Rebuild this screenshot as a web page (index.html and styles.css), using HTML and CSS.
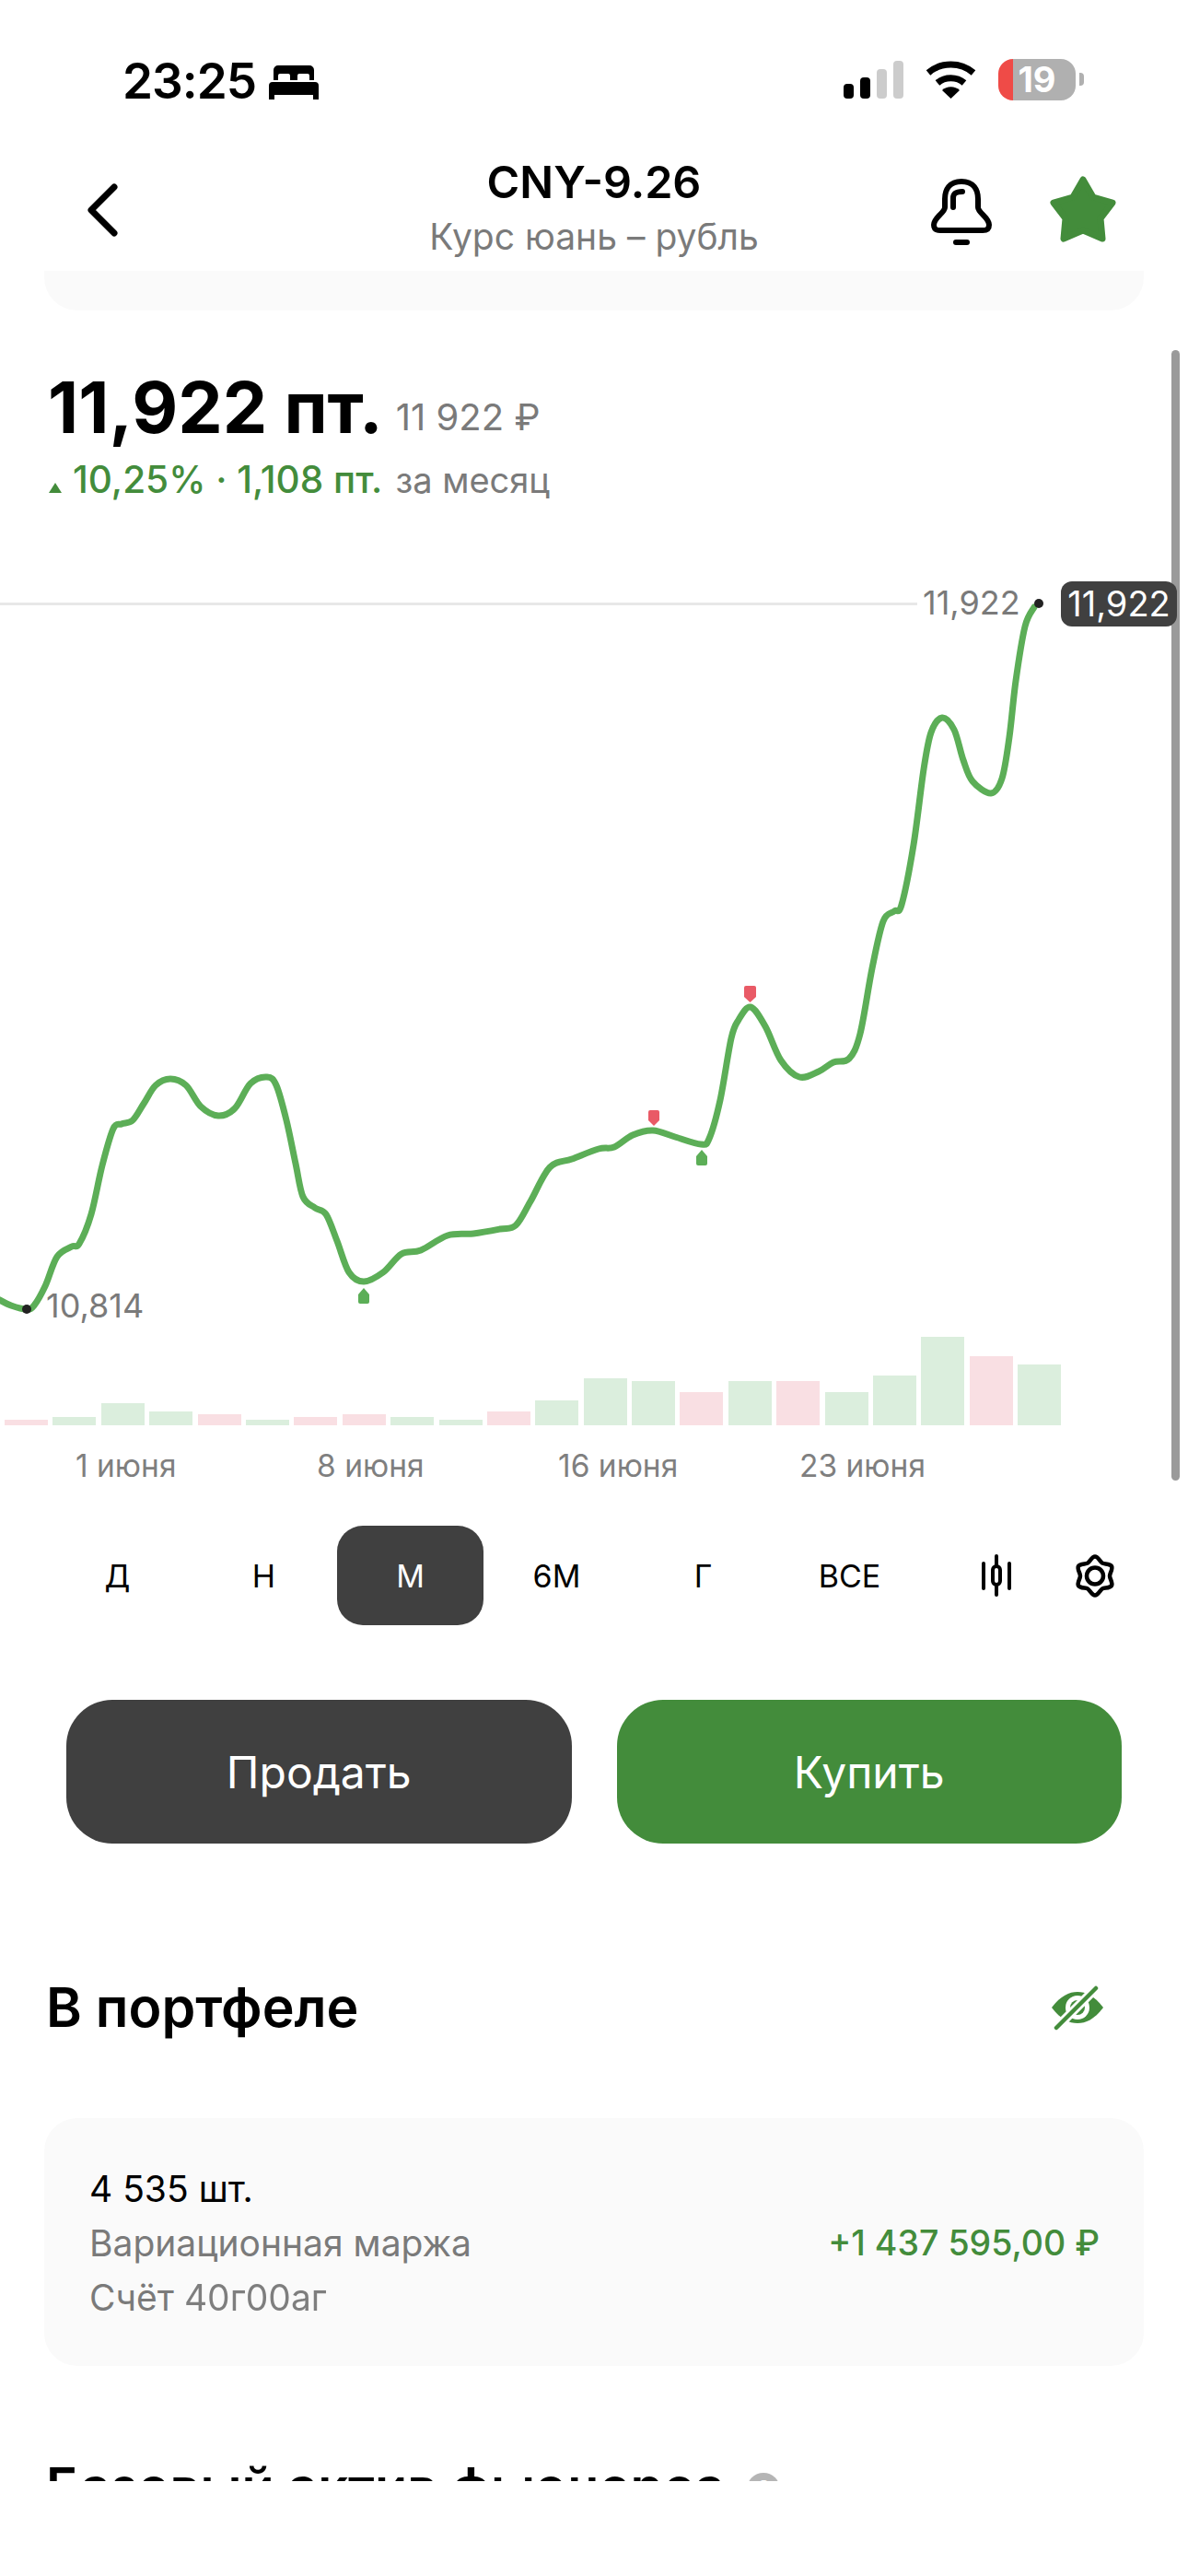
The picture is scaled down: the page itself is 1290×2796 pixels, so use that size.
FILE: index.html
```html
<!DOCTYPE html>
<html lang="ru">
<head>
  <meta charset="UTF-8" />
  <title>CNY-9.26</title>
  <link rel="stylesheet" href="styles.css">
</head>
<body>
  <div class="statusBar">
    <div class="statusLeft">
      <span class="time">23:25</span>
      <svg class="bedIcon" width="54" height="37" viewBox="0 0 54 37">
        <path d="M5 5a5 5 0 0 1 5-5h34a5 5 0 0 1 5 5v11H44v-5a2 2 0 0 0-2-2H33a2 2 0 0 0-2 2v5h-8v-5a2 2 0 0 0-2-2H12a2 2 0 0 0-2 2v5H5z"/>
        <path d="M0 22a4 4 0 0 1 4-4h46a4 4 0 0 1 4 4v15h-6v-5H6v5H0z"/>
      </svg>
    </div>
    <div class="statusRight">
      <div class="signal">
        <i class="bar1"></i><i class="bar2"></i><i class="bar3 off"></i><i class="bar4 off"></i>
      </div>
      <svg class="wifi" width="57" height="42" viewBox="0 0 57 42">
        <path d="M4 14C18 2 39 2 53 14" fill="none" stroke="#000" stroke-width="7"/>
        <path d="M14 25C22 18 35 18 43 25" fill="none" stroke="#000" stroke-width="7"/>
        <path d="M19 33C24 28 33 28 38 33L28.500 42z"/>
      </svg>
      <div class="battery"><span>19</span></div>
      <div class="batteryNub"></div>
    </div>
  </div>

  <div class="navBar">
    <svg class="backIcon" width="34" height="58" viewBox="0 0 34 58">
      <path d="M30 4L5 29l25 25" fill="none" stroke="#000" stroke-width="7" stroke-linecap="round" stroke-linejoin="round"/>
    </svg>
    <div class="navTitle">
      <div class="ticker">CNY-9.26</div>
      <div class="tickerName">Курс юань – рубль</div>
    </div>
    <div class="navActions">
      <svg class="bellIcon" width="66" height="72" viewBox="0 0 66 72">
        <path d="M33 3C20 3 15 12 15 22V31C15 37 3 42 3 50C3 55 6 56 10 56H56C60 56 63 55 63 50C63 42 51 37 51 31V22C51 12 46 3 33 3Z" fill="none" stroke="#000" stroke-width="6"/>
        <path d="M24 31V21C24 16 27 14 34 14" fill="none" stroke="#000" stroke-width="6" stroke-linecap="round"/>
        <rect x="24" y="66" width="18" height="6" rx="3"/>
      </svg>
      <svg class="starIcon" width="72" height="72" viewBox="0 0 72 72">
        <path d="M36 4L47 23L68 29L55 46L57 68L36 59L15 68L17 46L4 29L25 23Z" fill="#438c3b" stroke="#438c3b" stroke-width="7" stroke-linejoin="round"/>
      </svg>
    </div>
  </div>

  <div class="content">
    <div class="topCard"></div>
    <div class="scrollThumb"></div>

    <div class="priceBlock">
      <div class="priceRow">
        <span class="priceMain">11,922 пт.</span>
        <span class="priceRub">11 922 ₽</span>
      </div>
      <div class="changeRow">
        <span class="upArrow"></span>
        <span class="changeValue">10,25% · 1,108 пт.</span>
        <span class="changePeriod">за месяц</span>
      </div>
    </div>

    <div class="chart">
      <div class="lastLine"></div>
      <div class="lastLabel">11,922</div>
      <div class="lastTag">11,922</div>
      <div class="startLabel">10,814</div>
      <svg class="chartSvg" width="1290" height="1000" viewBox="0 600 1290 1000">
        <path id="chartLine" d="" fill="none" stroke="#5cae57" stroke-width="7" stroke-linejoin="round" stroke-linecap="round"/>
        <circle cx="1128" cy="655" r="5" fill="#222"/>
        <circle cx="29" cy="1421" r="5" fill="#222"/>
        <path d="M704 1207a2 2 0 0 1 2-2h8a2 2 0 0 1 2 2v9l-6 6-6-6z" fill="#e95a66"/>
        <path d="M808 1072a2 2 0 0 1 2-2h9a2 2 0 0 1 2 2v10l-6.500 6-6.500-6z" fill="#e95a66"/>
        <path d="M756 1263a2 2 0 0 0 2 2h8a2 2 0 0 0 2-2v-8l-6-7-6 7z" fill="#5cae57"/>
        <path d="M389 1413a2 2 0 0 0 2 2h8a2 2 0 0 0 2-2v-8l-6-7-6 7z" fill="#5cae57"/>
      </svg>
      <div class="volumes">
        <div class="vol red" style="height:6px"></div>
        <div class="vol" style="height:9px"></div>
        <div class="vol" style="height:24px"></div>
        <div class="vol" style="height:15px"></div>
        <div class="vol red" style="height:12px"></div>
        <div class="vol" style="height:6px"></div>
        <div class="vol red" style="height:9px"></div>
        <div class="vol red" style="height:12px"></div>
        <div class="vol" style="height:9px"></div>
        <div class="vol" style="height:6px"></div>
        <div class="vol red" style="height:15px"></div>
        <div class="vol" style="height:27px"></div>
        <div class="vol" style="height:51px"></div>
        <div class="vol" style="height:48px"></div>
        <div class="vol red" style="height:36px"></div>
        <div class="vol" style="height:48px"></div>
        <div class="vol red" style="height:48px"></div>
        <div class="vol" style="height:36px"></div>
        <div class="vol" style="height:54px"></div>
        <div class="vol" style="height:96px"></div>
        <div class="vol red" style="height:75px"></div>
        <div class="vol" style="height:66px"></div>
      </div>
      <div class="dates">
        <span>1 июня</span>
        <span>8 июня</span>
        <span>16 июня</span>
        <span>23 июня</span>
      </div>
    </div>

    <div class="periods">
      <div class="period">Д</div>
      <div class="period">Н</div>
      <div class="period active">М</div>
      <div class="period">6М</div>
      <div class="period">Г</div>
      <div class="period">ВСЕ</div>
      <div class="period">
        <svg width="34" height="46" viewBox="0 0 34 46">
          <path d="M3 10v27M31 10v27M17 2v10M17 34v10" fill="none" stroke="#000" stroke-width="4" stroke-linecap="round"/>
          <rect x="13" y="13" width="8" height="20" rx="4" fill="none" stroke="#000" stroke-width="4"/>
        </svg>
      </div>
      <svg class="gear" width="44" height="47" viewBox="0 0 44 47">
        <path d="M22 2.500C25.500 2.500 27.800 8.350 30 9.600C32.200 10.850 38.250 10 40 13C41.750 16 38 20.500 38 23.500C38 26.500 41.750 31 40 34C38.250 37 32.200 36.150 30 37.400C27.800 38.650 25.500 44.500 22 44.500C18.500 44.500 16.200 38.650 14 37.400C11.800 36.150 5.750 37 4 34C2.250 31 6 26.500 6 23.500C6 20.500 2.250 16 4 13C5.750 10 11.800 10.850 14 9.600C16.200 8.350 18.500 2.500 22 2.500Z" fill="none" stroke="#000" stroke-width="4.500"/>
        <circle cx="22" cy="23.500" r="9" fill="none" stroke="#000" stroke-width="4.500"/>
      </svg>
    </div>

    <div class="actions">
      <div class="actionBtn sell">Продать</div>
      <div class="actionBtn buy">Купить</div>
    </div>

    <div class="sectionHead">
      <h2>В портфеле</h2>
      <svg class="eyeIcon" width="56" height="50" viewBox="0 0 56 50">
        <path d="M0 25C10 12 19 8 28 8S46 12 56 25C46 38 37 42 28 42S10 38 0 25Z" fill="#438c3b"/>
        <circle cx="28" cy="25" r="13" fill="#fff"/>
        <circle cx="28" cy="25" r="8" fill="#438c3b"/>
        <path d="M4 48L49 3" stroke="#fff" stroke-width="10"/>
        <path d="M5 47L48 4" stroke="#438c3b" stroke-width="4.500" stroke-linecap="round"/>
      </svg>
    </div>

    <div class="positionCard">
      <div class="positionLeft">
        <div class="qty">4 535 шт.</div>
        <div class="muted">Вариационная маржа</div>
        <div class="muted">Счёт <span class="masked">40г00аг</span></div>
      </div>
      <div class="margin">+1 437 595,00 ₽</div>
    </div>

    <div class="nextHead">
      <h2>Базовый актив фьючерса</h2>
      <span class="helpDot">?</span>
    </div>
  </div>

  <script src="script.js"></script>
</body>
</html>
```

FILE: styles.css
```css
* {
  box-sizing: border-box;
}

body {
  font-family: Inter, "Noto Sans", sans-serif;
  margin: 0;
  width: 1290px;
  height: 2796px;
  overflow: hidden;
  background-color: #ffffff;
  color: #000000;
}

/* status bar */
.statusBar {
  height: 152px;
  padding: 64px 113px 0 133px;
  display: flex;
  justify-content: space-between;
  align-items: flex-start;
}

.statusLeft {
  display: flex;
  align-items: center;
  gap: 14px;
}

.time {
  font-size: 53px;
  line-height: 48px;
  font-weight: 600;
  letter-spacing: -1px;
}

.bedIcon {
  margin-top: 3px;
}

.statusRight {
  display: flex;
  align-items: flex-start;
}

.signal {
  display: flex;
  align-items: flex-end;
  gap: 7px;
  height: 41px;
  margin-top: 2px;
  margin-right: 23px;
}

.signal i {
  width: 11px;
  border-radius: 4px;
  background-color: #000000;
}

.signal .off {
  background-color: #cccccc;
}

.bar1 { height: 16px; }
.bar2 { height: 23px; }
.bar3 { height: 32px; }
.bar4 { height: 41px; }

.wifi {
  margin-top: 1px;
  margin-right: 23px;
}

.battery {
  width: 84px;
  height: 45px;
  border-radius: 16px;
  background: linear-gradient(90deg, #ef4b47 16px, #b0b0b0 16px);
  color: #ffffff;
  font-size: 38px;
  font-weight: 700;
  line-height: 45px;
  text-align: center;
}

.batteryNub {
  width: 5px;
  height: 14px;
  margin: 15px 0 0 4px;
  border-radius: 0 4px 4px 0;
  background-color: #b0b0b0;
}

/* nav */
.navBar {
  height: 142px;
  padding: 0 78px;
  display: grid;
  grid-template-columns: 1fr auto 1fr;
  align-items: start;
}

.backIcon {
  margin-top: 47px;
  margin-left: 16px;
}

.navTitle {
  text-align: center;
}

.ticker {
  font-size: 48.500px;
  line-height: 60px;
  font-weight: 600;
  margin-top: 16px;
}

.tickerName {
  font-size: 39px;
  line-height: 48px;
  color: #7a7a7a;
  margin-top: 5px;
}

.navActions {
  display: flex;
  justify-content: flex-end;
  align-items: flex-start;
  gap: 63px;
}

.bellIcon {
  margin-top: 42px;
}

.starIcon {
  margin-top: 39px;
}

/* scrolling content */
.content {
  height: 2399px;
  overflow: hidden;
  position: relative;
}

.topCard {
  height: 43px;
  margin: 0 48px;
  background-color: #fafafa;
  border-radius: 0 0 36px 36px;
}

.scrollThumb {
  position: absolute;
  left: 1272px;
  top: 86px;
  width: 9px;
  height: 1227px;
  border-radius: 5px;
  background-color: #9a9a9a;
}

.priceBlock {
  padding: 59px 0 0 52px;
}

.priceRow {
  display: flex;
  align-items: flex-start;
  gap: 14px;
  height: 97px;
}

.priceMain {
  font-size: 77px;
  line-height: 92px;
  font-weight: 700;
}

.priceRub {
  font-size: 40px;
  line-height: 48px;
  margin-top: 33px;
  color: #7a7a7a;
}

.changeRow {
  display: flex;
  align-items: baseline;
  gap: 14px;
  margin-top: 4px;
  padding-left: 1px;
  font-size: 38px;
  line-height: 48px;
}

.upArrow {
  width: 0;
  height: 0;
  border-left: 7px solid transparent;
  border-right: 7px solid transparent;
  border-bottom: 11px solid #438c3b;
  margin-right: -2px;
}

.changeValue {
  color: #438c3b;
  font-size: 40.500px;
  font-weight: 500;
}

.changePeriod {
  color: #7a7a7a;
}

/* chart: free canvas, starts at page y=600 */
.chart {
  position: relative;
  height: 1021px;
  margin-top: 55px;
}

.chartSvg {
  position: absolute;
  left: 0;
  top: 0;
}

.lastLine {
  position: absolute;
  left: 0;
  top: 54px;
  width: 996px;
  height: 3px;
  background-color: #e8e8e8;
}

.lastLabel,
.startLabel {
  position: absolute;
  font-size: 36px;
  line-height: 38px;
  color: #7a7a7a;
}

.lastLabel {
  left: 1002px;
  top: 35px;
}

.startLabel {
  left: 50px;
  top: 798px;
}

.lastTag {
  position: absolute;
  left: 1152px;
  top: 31px;
  width: 126px;
  height: 49px;
  border-radius: 12px;
  background-color: #404040;
  color: #ffffff;
  font-size: 38px;
  line-height: 49px;
  text-align: center;
}

.volumes {
  position: absolute;
  left: 5px;
  top: 851px;
  height: 96px;
  display: flex;
  align-items: flex-end;
  gap: 5.400px;
}

.vol {
  width: 47px;
  background-color: #dbeedd;
}

.vol.red {
  background-color: #f9dfe3;
}

.dates {
  position: absolute;
  left: 82px;
  top: 972px;
  display: grid;
  grid-template-columns: repeat(4, 262px);
  font-size: 33.500px;
  line-height: 38px;
  color: #7f7f7f;
}

/* period selector */
.periods {
  display: flex;
  align-items: center;
  height: 108px;
  padding-left: 48px;
  margin-top: 35px;
}

.period {
  width: 159px;
  height: 108px;
  display: flex;
  align-items: center;
  justify-content: center;
  font-size: 34px;
  font-weight: 400;
}

.period.active {
  background-color: #404040;
  color: #ffffff;
  border-radius: 28px;
}

.gear {
  margin-left: 6px;
}

/* buttons */
.actions {
  display: flex;
  gap: 49px;
  padding: 0 72px;
  margin-top: 81px;
}

.actionBtn {
  flex: 1;
  height: 156px;
  border-radius: 50px;
  display: flex;
  align-items: center;
  justify-content: center;
  color: #ffffff;
  font-size: 48px;
  font-weight: 400;
}

.sell {
  background-color: #404040;
}

.buy {
  background-color: #438c3b;
}

/* portfolio */
.sectionHead {
  display: flex;
  justify-content: space-between;
  align-items: center;
  padding: 0 92px 0 50px;
  margin-top: 144px;
  height: 68px;
}

h2 {
  margin: 0;
  font-size: 59px;
  line-height: 68px;
  font-weight: 600;
}

.positionCard {
  margin: 86px 48px 0;
  height: 269px;
  padding: 47px 48px 0 49px;
  background-color: #fafafa;
  border-radius: 36px;
  display: flex;
  justify-content: space-between;
  font-size: 39px;
  line-height: 59px;
}

.muted {
  color: #7a7a7a;
}

.masked {
  color: #555555;
  opacity: 0.75;
  filter: blur(0.5px);
}

.margin {
  color: #438c3b;
  font-size: 37.500px;
  font-weight: 500;
  margin-top: 59px;
}

.nextHead {
  display: flex;
  align-items: center;
  gap: 24px;
  padding-left: 50px;
  margin-top: 97px;
}

.nextHead h2 {
  font-size: 57.500px;
}

.helpDot {
  width: 36px;
  height: 36px;
  border-radius: 50%;
  background-color: #b5b5b5;
  color: #ffffff;
  font-size: 26px;
  line-height: 36px;
  text-align: center;
  margin-top: 6px;
}
```

FILE: script.js
```js
// price curve, smoothed through the sampled points
var points = [
  [-4,1409],[12,1417],[29,1421],[37,1417],[49,1396],[62,1364],[78,1353],[86,1350],[99,1318],[111,1265],
  [123,1225],[132,1220],[144,1216],[156,1198],[169,1178],[185,1171],[202,1178],[218,1201],[237,1211],
  [255,1203],[272,1176],[290,1169],[300,1178],[311,1216],[321,1263],[329,1299],[342,1311],[354,1318],
  [366,1347],[379,1381],[395,1391],[416,1381],[436,1361],[457,1357],[486,1341],[514,1339],[543,1334],
  [560,1330],[576,1304],[597,1267],[621,1258],[650,1247],[667,1245],[687,1232],[709,1227],[733,1234],
  [761,1242],[770,1236],[782,1194],[794,1127],[802,1107],[815,1093],[831,1114],[848,1151],[868,1169],[889,1163],
  [905,1153],[922,1149],[934,1122],[947,1051],[959,1000],[971,989],[979,982],[992,917],[1003,835],[1011,795],
  [1023,779],[1036,792],[1046,825],[1056,848],[1076,861],[1088,845],[1096,800],[1103,739],[1113,680],[1123,659]
];

var d = "M" + points[0][0] + " " + points[0][1];
for (var i = 0; i < points.length - 1; i++) {
  var p0 = points[i - 1] || points[i];
  var p1 = points[i];
  var p2 = points[i + 1];
  var p3 = points[i + 2] || p2;
  d += "C" + (p1[0] + (p2[0] - p0[0]) / 6) + " " + (p1[1] + (p2[1] - p0[1]) / 6) +
       " " + (p2[0] - (p3[0] - p1[0]) / 6) + " " + (p2[1] - (p3[1] - p1[1]) / 6) +
       " " + p2[0] + " " + p2[1];
}
document.getElementById("chartLine").setAttribute("d", d);
```
